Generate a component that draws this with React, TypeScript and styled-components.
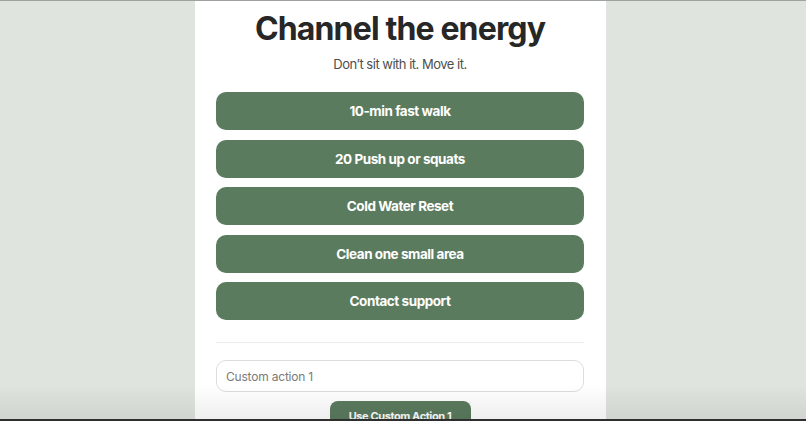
import React from "react";
import styled, { createGlobalStyle } from "styled-components";

const Global = createGlobalStyle`
  html, body { margin: 0; padding: 0; background: #dfe5de; overflow: hidden; }
  body { font-family: Inter, "Noto Sans", sans-serif; }
  * { box-sizing: border-box; }
`;

const Page = styled.div`
  min-height: 421px;
  display: flex;
  justify-content: center;
  padding-right: 5px;
  border-top: 1px solid #9fa39f;
`;

const Card = styled.main`
  width: 411px;
  background: #ffffff;
  padding: 7px 22px 0 21px;
  display: flex;
  flex-direction: column;
  align-items: stretch;
`;

const Title = styled.h1`
  margin: 0;
  font-size: 32px;
  font-weight: 700;
  letter-spacing: -0.85px;
  color: #262726;
  text-align: center;
  line-height: 42px;
`;

const Subtitle = styled.p`
  margin: 4px 0 0;
  font-size: 13px;
  letter-spacing: -0.5px;
  color: #4d4f4d;
  text-align: center;
  line-height: 20px;
`;

const ActionList = styled.div`
  display: flex;
  flex-direction: column;
  gap: 9.5px;
  margin-top: 18px;
`;

const ActionButton = styled.button`
  height: 38px;
  border: none;
  border-radius: 10px;
  background: #5b7b5e;
  color: #ffffff;
  font-family: Inter, sans-serif;
  font-size: 13.5px;
  font-weight: 700;
  letter-spacing: -0.45px;
  cursor: pointer;
`;

const Divider = styled.hr`
  margin: 22px 0 0;
  border: none;
  border-top: 1px solid #ececec;
`;

const CustomInput = styled.input`
  margin-top: 17px;
  height: 32px;
  border: 1px solid #dcdcdc;
  border-radius: 10px;
  padding: 0 9px;
  font-family: Inter, sans-serif;
  font-size: 12px;
  letter-spacing: -0.2px;
  color: #333;
  &::placeholder { color: #7a7a7a; }
`;

const UseButton = styled.button`
  align-self: center;
  margin-top: 9px;
  width: 141px;
  height: 30px;
  border: none;
  border-radius: 8px;
  background: #5b7b5e;
  color: #ffffff;
  font-family: Inter, sans-serif;
  font-size: 11px;
  font-weight: 700;
  letter-spacing: -0.4px;
  padding: 0;
`;

const BottomShade = styled.div`
  position: fixed;
  left: 0;
  right: 0;
  bottom: 0;
  height: 36px;
  background: linear-gradient(to bottom, rgba(0,0,0,0) 0%, rgba(0,0,0,0.06) 90%);
  border-bottom: 2px solid #2e2e2e;
  pointer-events: none;
`;

const actions = [
  "10-min fast walk",
  "20 Push up or squats",
  "Cold Water Reset",
  "Clean one small area",
  "Contact support",
];

export default function App() {
  return (
    <>
      <Global />
      <Page>
        <Card>
          <Title>Channel the energy</Title>
          <Subtitle>Don’t sit with it. Move it.</Subtitle>
          <ActionList>
            {actions.map((a) => (
              <ActionButton key={a}>{a}</ActionButton>
            ))}
          </ActionList>
          <Divider />
          <CustomInput placeholder="Custom action 1" />
          <UseButton>Use Custom Action 1</UseButton>
        </Card>
      </Page>
      <BottomShade />
    </>
  );
}
